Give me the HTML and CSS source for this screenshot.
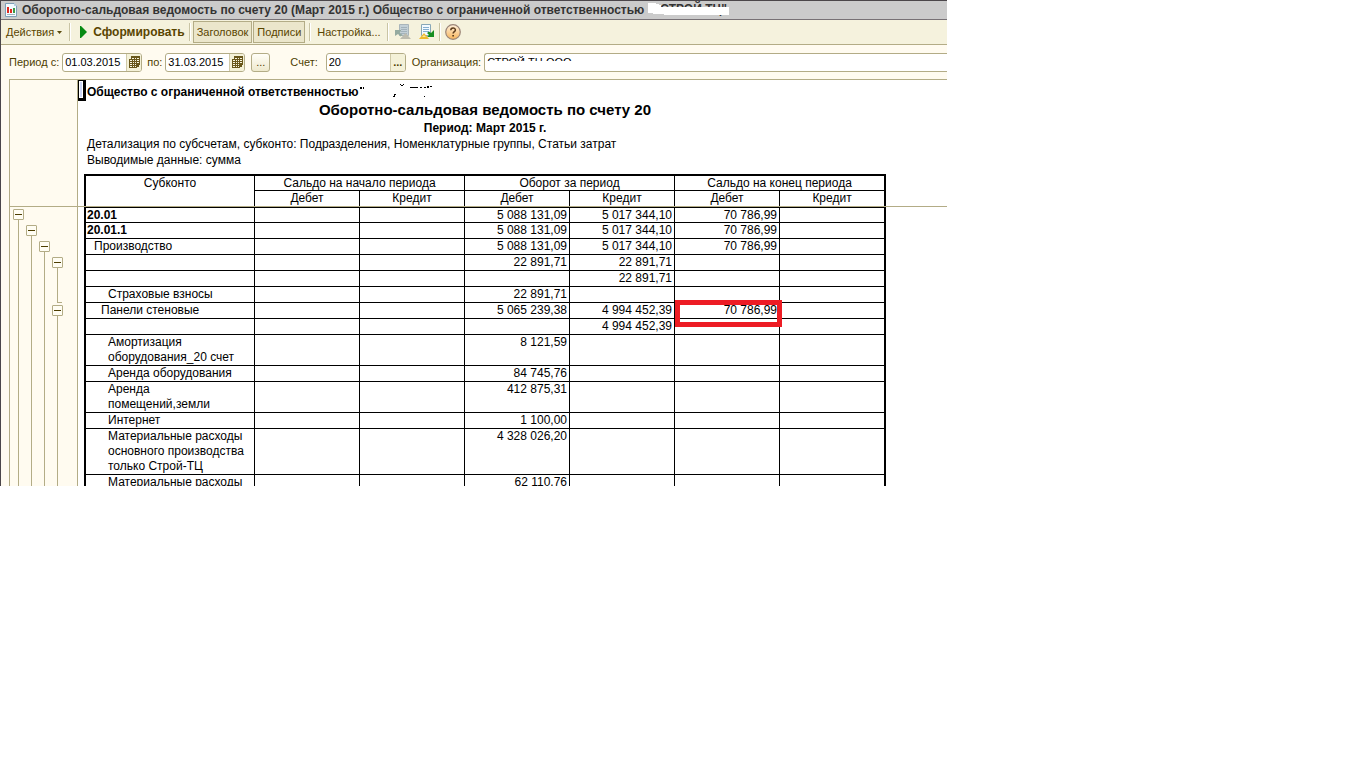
FILE: index.html
```html
<!DOCTYPE html>
<html lang="ru">
<head>
<meta charset="utf-8">
<title>Оборотно-сальдовая ведомость по счету 20</title>
<link rel="stylesheet" href="styles.css">
</head>
<body>
<main class="window">
  <header class="titlebar">
    <svg class="title-icon" width="12" height="14" viewBox="0 0 12 14" aria-hidden="true">
      <path d="M.5 .5H9l2.500 2.500V13.500H.5Z" fill="#f4fbff" stroke="#7f9fb8"/>
      <path d="M9 0v3h3" fill="#b9d0e0"/>
      <path d="M2 4h2v6H2zM5 6h2v4H5z" fill="#e02a22"/><path d="M8 5h2v5H8z" fill="#3d9a45"/>
      <path d="M2 11h8v1H2z" fill="#a3b4bf"/>
    </svg>
    <h1 class="title">Оборотно-сальдовая ведомость по счету 20 (Март 2015 г.) Общество с ограниченной ответственностью</h1>
    <span class="title-name">СТРОЙ ТЦ"
      <svg class="title-cover" width="81" height="12" viewBox="0 0 81 12" aria-hidden="true"><path d="M0 0h8v1h3v1h2v2h68v8H16v-1H5v-1H0z" fill="#fff"/></svg>
    </span>
  </header>

  <nav class="toolbar" aria-label="Команды отчета">
    <button class="tool actions">Действия <svg width="5" height="3" viewBox="0 0 5 3" aria-hidden="true"><path d="M0 0h5L2.500 3z" fill="#5b4a0c"/></svg></button>
    <span class="sep"></span>
    <button class="tool run"><svg width="7" height="12" viewBox="0 0 7 12" aria-hidden="true"><path d="M0 0h1l6 6-6 6H0z" fill="#078a12"/></svg>Сформировать</button>
    <span class="sep"></span>
    <span class="toggles">
      <button class="tool toggle" aria-pressed="true">Заголовок</button>
      <button class="tool toggle" aria-pressed="true">Подписи</button>
    </span>
    <span class="sep"></span>
    <button class="tool settings">Настройка...</button>
    <span class="sep"></span>
    <button class="tool icon" aria-label="Восстановить значения">
      <svg width="16" height="16" viewBox="0 0 16 16" aria-hidden="true">
        <path d="M4.500 .5h9v11h-9z" fill="#c3d0d6" stroke="#a9b5ba"/>
        <path d="M6 3.500h6M6 5.500h6M6 7.500h6M6 9.500h6" stroke="#a2b2bb"/>
        <path d="M0 6h6v1L4.500 8.500l3 2.500-2 1.500-2.500-2.500L0 12z" fill="#94aaa0"/>
        <path d="M10.500 9 16 15H5z" fill="#bdbcae"/>
      </svg>
    </button>
    <button class="tool icon save" aria-label="Сохранить значения">
      <svg width="16" height="16" viewBox="0 0 16 16" aria-hidden="true">
        <path d="M2.500 .5h9v11h-9z" fill="#f4faff" stroke="#88a7b7"/>
        <path d="M4 3.500h6M4 5.500h6M4 7.500h6" stroke="#86afd0"/>
        <path d="M5 9l5 6H0z" fill="#ecb92d"/><path d="M5 11l2 2H3z" fill="#fbe79a"/>
        <path d="M15 6v7H8l2-2-2-2 2-1.500 2 1.500z" fill="#168f22"/>
      </svg>
    </button>
    <span class="sep"></span>
    <button class="tool icon help" aria-label="Справка">
      <svg width="16" height="16" viewBox="0 0 16 16" aria-hidden="true">
        <defs><linearGradient id="helpFill" x2="0" y2="1"><stop stop-color="#fff0dc"/><stop offset="1" stop-color="#f6b45a"/></linearGradient></defs>
        <circle cx="8" cy="8" r="7.300" fill="url(#helpFill)" stroke="#9a8578" stroke-width="1.200"/>
        <path d="M5.800 6.300c0-3 4.600-3 4.600-.3 0 1.700-2.300 1.700-2.300 3.600" fill="none" stroke="#5c3c1c" stroke-width="1.500"/><path d="M7.300 11h1.700v1.600H7.300z" fill="#5c3c1c"/>
      </svg>
    </button>
  </nav>

  <form class="filters">
    <label for="from">Период с:</label>
    <span class="field date"><input id="from" value="01.03.2015"><button type="button" aria-label="Выбрать начало периода"><svg width="11" height="12" viewBox="0 0 11 12" aria-hidden="true"><path d="M2 0h9v9h-1v2H8v1H0V3h2z" fill="#69571b"/><path d="M3 2h2v1H3zM6 2h1v1H6zM8 2h2v1H8zM1 4h2v1H1zM4 4h1v1H4zM6 4h1v1H6zM8 4h2v1H8zM1 6h2v1H1zM4 6h1v1H4zM6 6h1v1H6zM8 6h2v1H8zM1 8h2v1H1zM4 8h1v1H4zM6 8h1v1H6zM1 10h2v1H1zM4 10h1v1H4zM6 10h1v1H6z" fill="#f8f5e0"/></svg></button></span>
    <label for="to">по:</label>
    <span class="field date"><input id="to" value="31.03.2015"><button type="button" aria-label="Выбрать конец периода"><svg width="11" height="12" viewBox="0 0 11 12" aria-hidden="true"><path d="M2 0h9v9h-1v2H8v1H0V3h2z" fill="#69571b"/><path d="M3 2h2v1H3zM6 2h1v1H6zM8 2h2v1H8zM1 4h2v1H1zM4 4h1v1H4zM6 4h1v1H6zM8 4h2v1H8zM1 6h2v1H1zM4 6h1v1H4zM6 6h1v1H6zM8 6h2v1H8zM1 8h2v1H1zM4 8h1v1H4zM6 8h1v1H6zM1 10h2v1H1zM4 10h1v1H4zM6 10h1v1H6z" fill="#f8f5e0"/></svg></button></span>
    <button type="button" class="period">...</button>
    <label for="account" class="account-label">Счет:</label>
    <span class="field account"><input id="account" value="20"><button type="button" aria-label="Выбрать счет"><b>...</b></button></span>
    <label for="org" class="org-label">Организация:</label>
    <span class="field org"><input id="org" value="СТРОЙ ТЦ ООО"><span class="org-cover"></span></span>
  </form>

  <section class="sheet">
    <aside class="gutter">
      <div class="gutter-head"></div>
      <div class="tree">
        <div class="level"><button aria-label="Свернуть 20.01"></button><i class="line"></i></div>
        <div class="level level-2"><button aria-label="Свернуть 20.01.1"></button><i class="line"></i></div>
        <div class="level level-3"><button aria-label="Свернуть Производство"></button><i class="line"></i></div>
        <div class="level level-4"><button aria-label="Свернуть группу"></button><i class="line closed"></i><button aria-label="Свернуть Панели стеновые"></button><i class="line"></i></div>
      </div>
    </aside>
    <div class="document">
      <span class="cursor"></span>
      <div class="report">
        <p class="company">Общество с ограниченной ответственностью
          <svg width="74" height="14" viewBox="0 0 74 14" aria-hidden="true"><path d="M1 3h2v2H1zM4 3h1v2H4zM35 10h2v1h-1v2h-2v-1h1zM41 0h1v1h2V0h1v1h-1v1h-2V1h-1zM51 3h8v1h-8zM61 3h2v1h-2zM65 3h2v1h-2zM68 2h2v2h-2zM71 2h2v1h-2zM65 12h1v1h-1z" fill="#000"/></svg>
        </p>
        <h2>Оборотно-сальдовая ведомость по счету 20</h2>
        <p class="span-label">Период: Март 2015 г.</p>
        <p>Детализация по субсчетам, субконто: Подразделения, Номенклатурные группы, Статьи затрат</p>
        <p>Выводимые данные: сумма</p>
        <table>
          <colgroup><col class="name-col"><col><col><col><col><col><col class="last-col"></colgroup>
          <thead>
            <tr class="snug"><th rowspan="2">Субконто</th><th colspan="2">Сальдо на начало периода</th><th colspan="2">Оборот за период</th><th colspan="2">Сальдо на конец периода</th></tr>
            <tr><th>Дебет</th><th>Кредит</th><th>Дебет</th><th>Кредит</th><th>Дебет</th><th>Кредит</th></tr>
          </thead>
          <tbody>
            <tr class="first"><td class="strong">20.01</td><td></td><td></td><td>5 088 131,09</td><td>5 017 344,10</td><td>70 786,99</td><td></td></tr>
            <tr><td class="strong">20.01.1</td><td></td><td></td><td>5 088 131,09</td><td>5 017 344,10</td><td>70 786,99</td><td></td></tr>
            <tr><td class="in-1">Производство</td><td></td><td></td><td>5 088 131,09</td><td>5 017 344,10</td><td>70 786,99</td><td></td></tr>
            <tr><td></td><td></td><td></td><td>22 891,71</td><td>22 891,71</td><td></td><td></td></tr>
            <tr><td></td><td></td><td></td><td></td><td>22 891,71</td><td></td><td></td></tr>
            <tr><td class="in-3">Страховые взносы</td><td></td><td></td><td>22 891,71</td><td></td><td></td><td></td></tr>
            <tr><td class="in-2">Панели стеновые</td><td></td><td></td><td>5 065 239,38</td><td>4 994 452,39</td><td class="marked">70 786,99</td><td></td></tr>
            <tr><td></td><td></td><td></td><td></td><td>4 994 452,39</td><td></td><td></td></tr>
            <tr><td class="in-3">Амортизация оборудования_20 счет</td><td></td><td></td><td>8 121,59</td><td></td><td></td><td></td></tr>
            <tr><td class="in-3">Аренда оборудования</td><td></td><td></td><td>84 745,76</td><td></td><td></td><td></td></tr>
            <tr><td class="in-3">Аренда<br>помещений,земли</td><td></td><td></td><td>412 875,31</td><td></td><td></td><td></td></tr>
            <tr><td class="in-3">Интернет</td><td></td><td></td><td>1 100,00</td><td></td><td></td><td></td></tr>
            <tr><td class="in-3">Материальные расходы основного производства только Строй-ТЦ</td><td></td><td></td><td>4 328 026,20</td><td></td><td></td><td></td></tr>
            <tr class="cut"><td class="in-3"><div>Материальные расходы</div></td><td></td><td></td><td><div>62 110,76</div></td><td></td><td></td><td></td></tr>
          </tbody>
        </table>
      </div>
    </div>
    <span class="freeze-line"></span>
  </section>
</main>
</body>
</html>
```
FILE: styles.css
```css
* { box-sizing: border-box; }
body { margin: 0; background: #fff; font: 12px/15px "Liberation Sans", Arial, sans-serif; color: #000; }
button, input { font: inherit; color: inherit; margin: 0; padding: 0; border: 0; background: none; }
svg { display: block; flex: none; }
h1, h2, p { margin: 0; font-size: 12px; }

.window { width: 69.43%; border-left: 1px solid #4b464a; background: #fffbf0; overflow: hidden; }

.titlebar { display: flex; align-items: center; height: 20px; padding-left: 4px; background: #cbcbcb; border-top: 1px solid #4b464a; border-bottom: 1px solid #777175; color: #333; font-weight: bold; white-space: nowrap; }
.title { margin-left: 5px; }
.title-name { position: relative; align-self: flex-start; margin-left: 4px; padding: 1px 0 0 12px; }
.title-cover { position: absolute; left: 0; top: 2px; }

.toolbar { display: flex; align-items: center; height: 25px; padding-left: 5px; background: #f5f2dd; border-bottom: 1px solid #b3ac86; color: #594500; font-size: 11px; }
.tool { display: flex; align-items: center; height: 22px; white-space: nowrap; }
.actions { gap: 3px; padding-right: 3px; }
.sep { width: 2px; height: 18px; margin: 0 2px 0 4px; background: linear-gradient(90deg, #c9c4a4 50%, #fff 50%); }
.run { gap: 6px; padding-left: 7px; font-size: 12px; font-weight: bold; }
.toggles { display: flex; gap: 1px; }
.toggle { padding: 0 3px; background: #ebe6cb; border: 1px solid #b3ac86; }
.settings { padding: 0 2px 0 4px; }
.icon { padding: 0 4px; }
.save { padding-right: 0; }
.help { padding-left: 2px; }

.filters { display: flex; align-items: center; height: 34px; padding-left: 8px; color: #4d3d00; font-size: 11px; white-space: nowrap; }
.field { display: flex; height: 19px; margin-left: 3px; background: #fff; border: 1px solid #b3ac86; border-radius: 3px; overflow: hidden; }
.field input { flex: 1; min-width: 0; padding-left: 2px; color: #000; }
.field button { display: flex; align-items: center; justify-content: center; width: 15px; background: #f4f1d8; border-left: 1px solid #d0caa8; }
.date { width: 80px; margin-right: 5px; }
.period { width: 19px; height: 19px; margin-left: 1px; border: 1px solid #b3ac86; border-radius: 3px; background: linear-gradient(#fffef8, #eee9cd); }
.account-label { margin-left: 20px; }
.account { width: 80px; margin-left: 8px; }
.org-label { margin-left: 6px; }
.org { position: relative; flex: 1; border-right: 0; border-radius: 3px 0 0 3px; }
.org-cover { position: absolute; left: 1px; right: 0; top: 7px; bottom: 0; background: #fff; }

.sheet { position: relative; display: flex; margin-left: 8px; border-top: 1px solid #b3ac86; border-left: 1px solid #b3ac86; }
.gutter { display: flex; flex-direction: column; width: 68px; flex: none; border-right: 1px solid #b3ac86; }
.gutter-head { height: 127px; }
.tree { display: flex; flex: 1; padding: 2px 0 0 2px; }
.level { display: flex; flex-direction: column; align-items: center; width: 13px; }
.level-2 { padding-top: 16px; }
.level-3 { padding-top: 32px; }
.level-4 { padding-top: 48px; }
.level button { display: flex; align-items: center; justify-content: center; width: 11px; height: 11px; flex: none; background: #fffdf3; border: 1px solid #b3ac86; border-radius: 1px; }
.level button::before { content: ""; width: 7px; height: 1px; background: #4d3d00; }
.line { flex: 1; width: 1px; background: #b3ac86; }
.closed { flex: none; width: 5px; height: 35px; margin: 0 0 2px 4px; background: none; border-left: 1px solid #b3ac86; border-bottom: 1px solid #b3ac86; }
.freeze-line { position: absolute; left: 0; right: 0; top: 126px; height: 1px; background: #b3ac86; }

.document { display: flex; align-items: flex-start; flex: 1; background: #fff; }
.cursor { width: 8px; height: 21px; margin-right: -2px; flex: none; background: #ccd6f5; border: solid #000; border-width: 1px 3px 3px 1px; box-shadow: inset 0 0 0 1px #fff; }
.report { width: 802px; padding-top: 4px; }
.report p { line-height: 16px; padding-left: 3px; }
.report .company { display: flex; font-weight: bold; }
.report h2 { font-size: 15px; line-height: 20px; text-align: center; }
.report .span-label { padding: 0 3px; font-weight: bold; text-align: center; }

table { width: 100%; margin-top: 6px; table-layout: fixed; border: 2px solid #000; border-bottom: 0; border-spacing: 0; }
col { width: 105px; }
.name-col { width: 169px; }
.last-col { width: 104px; }
th, td { height: 16px; padding: 0 2px; border: solid #000; border-width: 0 1px 1px 0; font-weight: normal; vertical-align: top; text-align: right; }
th { text-align: center; }
.snug th { height: 15px; line-height: 14px; }
.first td { border-top-width: 1px; line-height: 14px; }
th:last-child, td:last-child { border-right: 0; }
td:first-child { padding-left: 1px; text-align: left; }
td.in-1 { padding-left: 8px; }
td.in-2 { padding-left: 15px; }
td.in-3 { padding-left: 22px; }
.strong { font-weight: bold; }
.marked { position: relative; }
.marked::after { content: ""; position: absolute; box-sizing: border-box; left: 0; right: -3px; top: -3px; height: 27px; border: 5px solid #ed1c24; }
.cut td { height: 11px; border-bottom: 0; }
.cut div { height: 11px; overflow: hidden; }
```
